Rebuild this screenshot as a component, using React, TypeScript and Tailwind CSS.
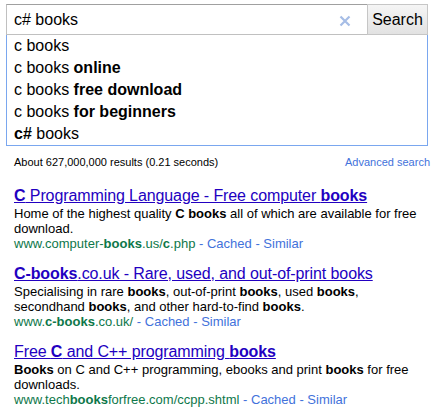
const suggestions: { plain: string; bold: string; boldFirst?: boolean }[] = [
  { plain: 'c books', bold: '' },
  { plain: 'c books ', bold: 'online' },
  { plain: 'c books ', bold: 'free download' },
  { plain: 'c books ', bold: 'for beginners' },
  { plain: ' books', bold: 'c#', boldFirst: true },
]

type Part = string | { b: string }

const results: { title: Part[]; snippet: Part[]; url: Part[] }[] = [
  {
    title: [{ b: 'C' }, ' Programming Language - Free computer ', { b: 'books' }],
    snippet: ['Home of the highest quality ', { b: 'C' }, ' ', { b: 'books' }, ' all of which are available for free download.'],
    url: ['www.computer-', { b: 'books' }, '.us/', { b: 'c' }, '.php'],
  },
  {
    title: [{ b: 'C-books' }, '.co.uk - Rare, used, and out-of-print books'],
    snippet: [
      'Specialising in rare ', { b: 'books' }, ', out-of-print ', { b: 'books' }, ', used ', { b: 'books' },
      ', secondhand ', { b: 'books' }, ', and other hard-to-find ', { b: 'books' }, '.',
    ],
    url: ['www.', { b: 'c-books' }, '.co.uk/'],
  },
  {
    title: ['Free ', { b: 'C' }, ' and C++ programming ', { b: 'books' }],
    snippet: [{ b: 'Books' }, ' on C and C++ programming, ebooks and print ', { b: 'books' }, ' for free downloads.'],
    url: ['www.tech', { b: 'books' }, 'forfree.com/ccpp.shtml'],
  },
]

function Rich({ parts }: { parts: Part[] }) {
  return (
    <>
      {parts.map((p, i) => (typeof p === 'string' ? <span key={i}>{p}</span> : <b key={i} className="font-bold">{p.b}</b>))}
    </>
  )
}

export default function App() {
  return (
    <div className="w-[433px] h-[412px] bg-white overflow-hidden font-['Liberation_Sans',Arial,sans-serif] text-black pt-1 pl-[6px] pr-[5px]">
      {/* search box */}
      <div className="flex h-[31px]">
        <div className="flex-1 flex items-center border border-[#c0c0c0] border-t-[#a0a0a0] border-r-0 pl-[7px] pr-[16px]">
          <span className="flex-1 text-[16px]">c# books</span>
          <svg width="12" height="12" viewBox="0 0 12 12" className="mt-[2px]">
            <path d="M1.5 1.5 L10.5 10.5 M10.5 1.5 L1.5 10.5" stroke="#a6bde6" strokeWidth="2.2" />
          </svg>
        </div>
        <button className="w-[61px] border border-[#c6c6c6] bg-gradient-to-b from-[#f5f5f5] to-[#e2e2e2] text-[16px] text-black">
          Search
        </button>
      </div>

      {/* suggestions */}
      <div className="border border-t-0 border-[#7aa7ef] pl-[7px]">
        {suggestions.map((s, i) => (
          <div key={i} className="h-[22px] leading-[22px] text-[16px]">
            {s.boldFirst ? (
              <>
                <b className="font-bold">{s.bold}</b>
                {s.plain}
              </>
            ) : (
              <>
                {s.plain}
                {s.bold && <b className="font-bold">{s.bold}</b>}
              </>
            )}
          </div>
        ))}
      </div>

      {/* stats */}
      <div className="flex justify-between items-center mt-[8px] pl-[8px] -mr-[2px] text-[11px]">
        <span>About 627,000,000 results (0.21 seconds)</span>
        <span className="text-[#4272db] text-[11px]">Advanced search</span>
      </div>

      {/* results */}
      <div className="pl-[8px] mt-[15px] flex flex-col gap-[12px]">
        {results.map((r, i) => (
          <div key={i}>
            <div className="text-[16px] leading-[20px] text-[#2200c1] underline tracking-[-0.1px]">
              <Rich parts={r.title} />
            </div>
            <div className="text-[13px] leading-[15px] pr-[8px]">
              <Rich parts={r.snippet} />
            </div>
            <div className="text-[13px] leading-[16px] text-[#4272db]">
              <span className="text-[#0e774a]">
                <Rich parts={r.url} />
              </span>{' '}
              - Cached - Similar
            </div>
          </div>
        ))}
      </div>
    </div>
  )
}
